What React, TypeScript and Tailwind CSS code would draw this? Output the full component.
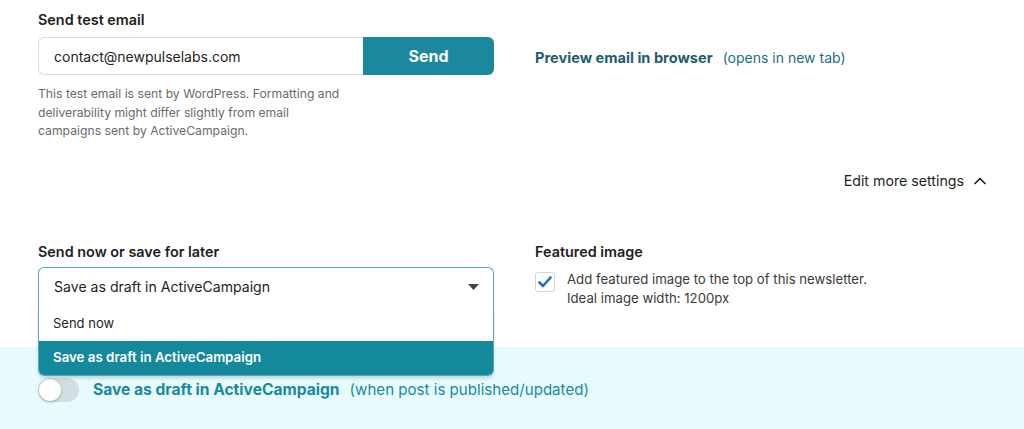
import React from 'react';
import { ChevronUp } from 'lucide-react';

const font = { fontFamily: 'Inter, "Noto Sans", sans-serif' };

function SendTestEmail() {
  return (
    <div className="flex pt-[10px]">
      <div className="w-[456px]">
        <div className="h-5 text-[14.4px] leading-5 font-semibold text-[#1e1e1e]">Send test email</div>
        <div className="mt-[7px] flex h-[38px]">
          <div className="flex flex-1 items-center rounded-l-[6px] border border-r-0 border-[#dcdcdc] pl-[15px] text-[14px] text-[#1e1e1e]">
            contact@newpulselabs.com
          </div>
          <button className="w-[131px] rounded-r-[6px] bg-[#1a899d] text-[16px] font-bold text-white">Send</button>
        </div>
        <p className="mt-[10px] w-[305px] text-[12.2px] leading-[18.5px] text-[#6a6a6a]">
          This test email is sent by WordPress. Formatting and deliverability might differ slightly from email campaigns sent by ActiveCampaign.
        </p>
      </div>
      <div className="ml-[41px] mt-[37px] whitespace-nowrap leading-5">
        <span className="text-[14.6px] font-bold text-[#1d5d70]">Preview email in browser</span>
        <span className="ml-[10px] text-[14px] text-[#1d6f82]">(opens in new tab)</span>
      </div>
    </div>
  );
}

function SendSelect() {
  return (
    <div className="w-[456px]">
      <div className="h-5 text-[14.4px] leading-5 font-semibold text-[#1e1e1e]">Send now or save for later</div>
      <div className="relative mt-[5px]">
        <div className="flex h-[40px] items-center justify-between rounded-t-[6px] border border-b-0 border-[#55a9b8] pl-[15px] pr-[14px] text-[14.1px] text-[#1e1e1e]">
          <span>Save as draft in ActiveCampaign</span>
          <svg width="11" height="6" viewBox="0 0 11 6"><path d="M0 0h11L5.5 6z" fill="#444" /></svg>
        </div>
        <div className="absolute left-0 right-0 top-full z-10 overflow-hidden rounded-b-[6px] border border-t-0 border-[#55a9b8] bg-white shadow-[0_3px_4px_-1px_rgba(0,0,0,0.18)]">
          <div className="flex h-[34px] items-center pl-[14px] text-[13px] text-[#1e1e1e]">Send now</div>
          <div className="flex h-[34px] items-center bg-[#14899c] pl-[14px] text-[13.3px] font-semibold text-white">Save as draft in ActiveCampaign</div>
        </div>
      </div>
    </div>
  );
}

function FeaturedImage() {
  return (
    <div className="ml-[41px]">
      <div className="h-5 text-[14.4px] leading-5 font-semibold text-[#1e1e1e]">Featured image</div>
      <div className="mt-[8px] flex">
        <div className="mt-[2px] flex h-[20px] w-[20px] items-center justify-center rounded-[3px] border border-[#d6d6d6] bg-white">
          <svg width="14" height="12" viewBox="0 0 14 12"><path d="M1.5 6.5l3.5 3.5L12.5 1.5" fill="none" stroke="#2271b1" strokeWidth="2.6" strokeLinecap="round" strokeLinejoin="round" /></svg>
        </div>
        <p className="ml-[12px] text-[13.2px] leading-[19px] text-[#3a3a3a]">
          Add featured image to the top of this newsletter.<br />Ideal image width: 1200px
        </p>
      </div>
    </div>
  );
}

export default function App() {
  return (
    <div className="h-[429px] w-[1024px] overflow-hidden bg-white" style={font}>
      <div className="h-[347px] pl-[38px]">
        <SendTestEmail />
        <div className="mt-[29px] flex h-[22px] items-center justify-end pr-[34px] text-[14.2px] text-[#1e1e1e]">
          <span>Edit more settings</span>
          <ChevronUp className="ml-[6px] h-[20px] w-[20px]" strokeWidth={2} />
        </div>
        <div className="mt-[50px] flex">
          <SendSelect />
          <FeaturedImage />
        </div>
      </div>
      <div className="flex h-[82px] items-start bg-[#e7fbfd] pl-[38px] pt-[31px]">
        <div className="relative h-[24px] w-[41px] rounded-full bg-[#d3dfe2]">
          <div className="absolute left-[1px] top-[1px] h-[22px] w-[22px] rounded-full bg-white shadow-[0_1px_3px_rgba(0,0,0,0.3)]" />
        </div>
        <div className="ml-[14px] flex h-[24px] items-center">
          <span className="text-[15.6px] font-bold text-[#1a899d]">Save as draft in ActiveCampaign</span>
          <span className="ml-[10px] text-[15.1px] text-[#1a899d]">(when post is published/updated)</span>
        </div>
      </div>
    </div>
  );
}
